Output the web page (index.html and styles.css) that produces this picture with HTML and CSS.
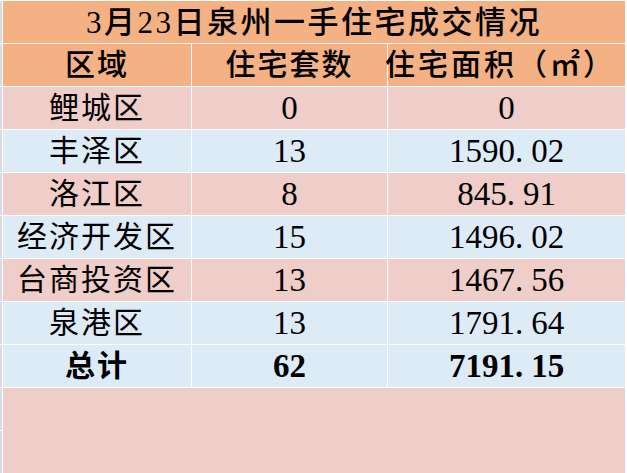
FILE: index.html
```html
<!DOCTYPE html>
<html lang="zh-CN">
<head>
<meta charset="utf-8">
<title>3月23日泉州一手住宅成交情况</title>
<link rel="stylesheet" href="styles.css">
</head>
<body>
<div class="sheet">
  <div class="gutter"></div>
  <div class="grid">
    <div class="cell title span3">3月23日泉州一手住宅成交情况</div>

    <div class="cell head">区域</div>
    <div class="cell head">住宅套数</div>
    <div class="cell head head-wide">住宅面积（㎡）</div>

    <div class="cell pink">鲤城区</div>
    <div class="cell pink num">0</div>
    <div class="cell pink num">0</div>

    <div class="cell blue">丰泽区</div>
    <div class="cell blue num">13</div>
    <div class="cell blue num">1590<span class="dot">.</span>02</div>

    <div class="cell pink">洛江区</div>
    <div class="cell pink num">8</div>
    <div class="cell pink num">845<span class="dot">.</span>91</div>

    <div class="cell blue">经济开发区</div>
    <div class="cell blue num">15</div>
    <div class="cell blue num">1496<span class="dot">.</span>02</div>

    <div class="cell pink">台商投资区</div>
    <div class="cell pink num">13</div>
    <div class="cell pink num">1467<span class="dot">.</span>56</div>

    <div class="cell blue">泉港区</div>
    <div class="cell blue num">13</div>
    <div class="cell blue num">1791<span class="dot">.</span>64</div>

    <div class="cell blue total">总计</div>
    <div class="cell blue num total">62</div>
    <div class="cell blue num total">7191<span class="dot">.</span>15</div>

    <div class="cell pink span3 filler"></div>
  </div>
</div>
</body>
</html>
```

FILE: styles.css
```css
html, body {
  margin: 0;
  padding: 0;
  background: #ffffff;
}

.sheet {
  display: flex;
  gap: 1px;
  width: 627px;
  height: 473px;
  overflow: hidden;
  background: #ffffff;
}

.gutter {
  width: 2px;
  flex: none;
  background: repeating-linear-gradient(to bottom, #ffffff 0, #ffffff 1px, #d9dae2 1px, #d9dae2 43px);
}

.grid {
  display: grid;
  grid-template-columns: 188px 195px 237px;
  grid-template-rows: repeat(9, 42px) 1fr;
  gap: 1px;
  padding-top: 1px;
  background: #ffffff;
  font-family: "Liberation Serif", "Noto Sans CJK SC", serif;
  color: #000000;
}

.cell {
  display: flex;
  align-items: center;
  justify-content: center;
  font-size: 30px;
  letter-spacing: 2px;
  white-space: nowrap;
  line-height: 1;
}

.span3 {
  grid-column: 1 / span 3;
}

.title {
  background: #f4b183;
  font-weight: 500;
  font-size: 31px;
  letter-spacing: 2.5px;
}

.head {
  background: #f4b183;
  font-weight: 500;
}

.head-wide {
  padding-right: 12px;
  letter-spacing: 3px;
}

.pink {
  background: #efcdc8;
}

.blue {
  background: #ddebf7;
}

.num {
  font-size: 33px;
  font-weight: 400;
  letter-spacing: 0;
}

.dot {
  letter-spacing: 8px;
}

.total {
  font-weight: 700;
}

.filler {
  min-height: 0;
}
```
